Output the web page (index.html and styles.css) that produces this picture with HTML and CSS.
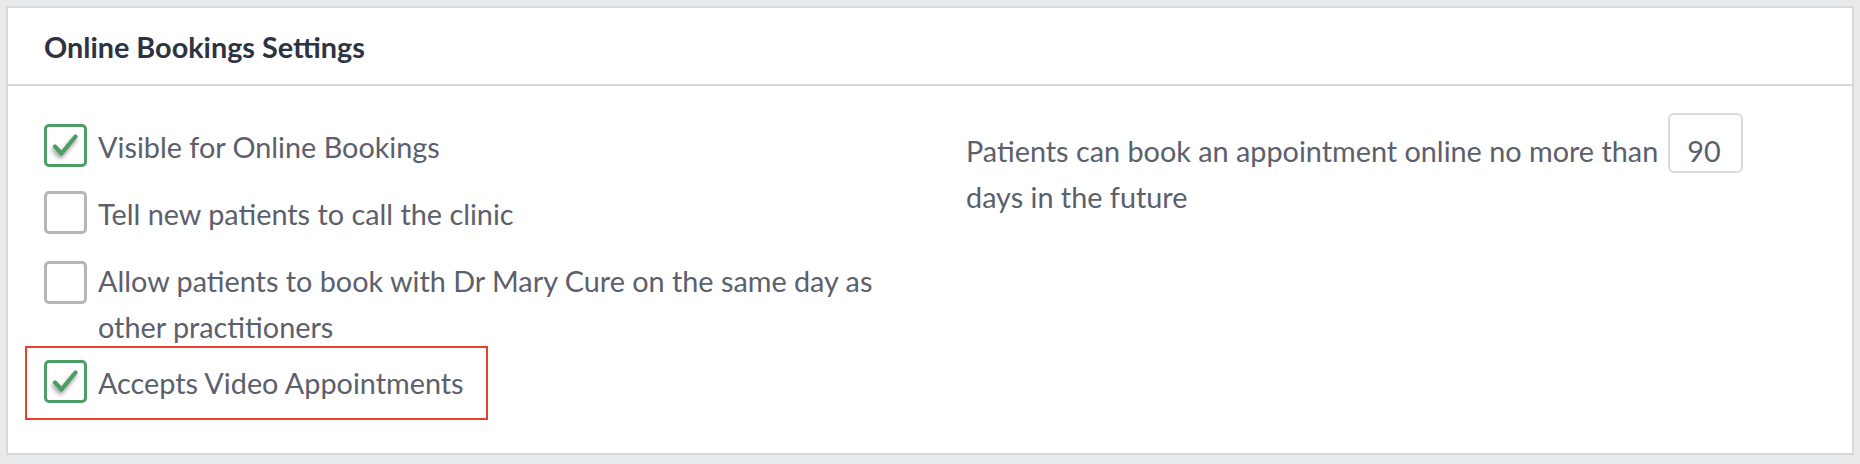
FILE: index.html
```html
<!DOCTYPE html>
<html lang="en">
<head>
<meta charset="utf-8">
<title>Online Bookings Settings</title>
<link rel="stylesheet" href="styles.css">
</head>
<body>
<section class="card">
  <header class="card-header">
    <h2 class="card-title">Online Bookings Settings</h2>
  </header>
  <div class="card-body">
    <div class="col col-left">
      <ul class="options">
        <li class="option">
          <span class="box is-checked">
            <svg class="tick" viewBox="0 0 37 37" width="37" height="37"><path d="M8 19.5 L14.5 26.5 L28.5 9.5" /></svg>
          </span>
          <span class="label">Visible for Online Bookings</span>
        </li>
        <li class="option">
          <span class="box"></span>
          <span class="label">Tell new patients to call the clinic</span>
        </li>
        <li class="option option-multi">
          <span class="box"></span>
          <span class="label">Allow patients to book with Dr Mary Cure on the same day as other practitioners</span>
        </li>
        <li class="option option-highlight">
          <span class="box is-checked">
            <svg class="tick" viewBox="0 0 37 37" width="37" height="37"><path d="M8 19.5 L14.5 26.5 L28.5 9.5" /></svg>
          </span>
          <span class="label">Accepts Video Appointments</span>
        </li>
      </ul>
    </div>
    <div class="col col-right">
      <p class="limit">Patients can book an appointment online no more than<span class="num-input">90</span>days in the future</p>
    </div>
  </div>
</section>
</body>
</html>
```
FILE: styles.css
```css
html, body {
  margin: 0;
  padding: 0;
}
body {
  background: #e9eaec;
  padding: 6px 6px 0 6px;
  font-family: Lato, "Open Sans", "Liberation Sans", sans-serif;
  color: #5b606c;
}
.card {
  background: #ffffff;
  border: 2px solid #d8d9db;
  height: 449px;
  box-sizing: border-box;
}
.card-header {
  height: 78px;
  border-bottom: 2px solid #d8d9db;
  padding: 0 36px;
  box-sizing: border-box;
  display: flex;
  align-items: center;
}
.card-title {
  margin: 0;
  font-size: 28.8px;
  font-weight: 700;
  color: #2d3341;
  line-height: 1;
  padding-top: 2px;
}
.card-body {
  display: grid;
  grid-template-columns: 1fr 1fr;
  padding-top: 27px;
}
.col {
  padding: 0 36px;
}
.col-right {
  padding-right: 62px;
}
.options {
  list-style: none;
  margin: 11px 0 0 0;
  padding: 0;
  display: flex;
  flex-direction: column;
  gap: 10px;
}
.option {
  display: flex;
  align-items: flex-start;
  gap: 11px;
  min-height: 57px;
  font-size: 28.8px;
  line-height: 46px;
}
.option-multi .box {
  margin-top: 3px;
}
.box {
  flex: 0 0 auto;
  width: 43px;
  height: 43px;
  box-sizing: border-box;
  border: 3px solid #b5b6bb;
  border-radius: 5px;
  background: #fff;
  display: flex;
  align-items: center;
  justify-content: center;
}
.box.is-checked {
  border-color: #4c9e64;
}
.tick {
  display: block;
  filter: drop-shadow(-1px 3px 2px rgba(0, 0, 0, 0.4));
}
.tick path {
  fill: none;
  stroke: #4c9e64;
  stroke-width: 4.2;
  stroke-linecap: round;
  stroke-linejoin: round;
}
.option-highlight {
  position: relative;
  align-self: flex-start;
}
.option-highlight::after {
  content: "";
  position: absolute;
  top: -14px;
  left: -19px;
  right: -24px;
  bottom: -3px;
  border: 2px solid #e8402b;
  pointer-events: none;
}
.limit {
  margin: 0;
  font-size: 28.8px;
  line-height: 46px;
}
.num-input {
  display: inline-block;
  box-sizing: border-box;
  width: 75px;
  height: 60px;
  margin: 0 14px 0 10px;
  padding: 0 0 0 17px;
  border: 2px solid #dadbdd;
  border-radius: 6px;
  line-height: 72px;
  color: #5b606c;
  vertical-align: baseline;
  text-align: left;
}
```
